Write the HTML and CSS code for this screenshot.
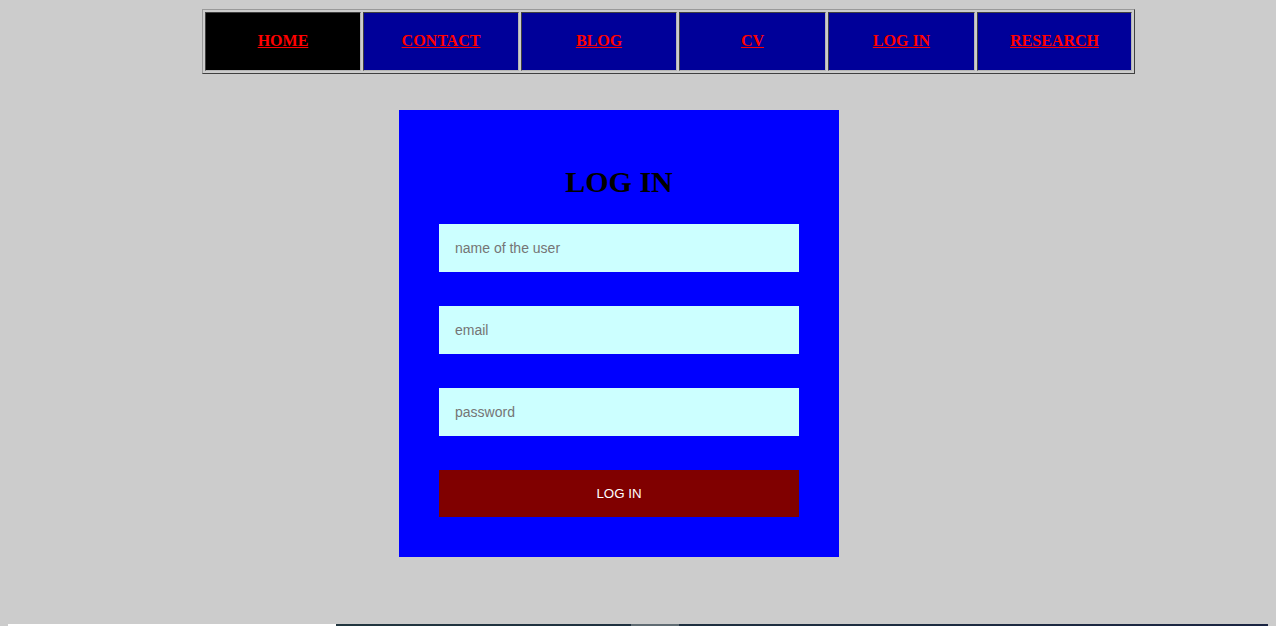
FILE: index.html
```html
<!DOCTYPE html>
<html lang="en">
<head>
<meta charset="utf-8">
<title>Log in</title>
<link rel="stylesheet" href="styles.css">
</head>
<body>
<nav class="nav">
  <div class="nav-item active w156"><a href="#">HOME</a></div>
  <div class="nav-item w156"><a href="#">CONTACT</a></div>
  <div class="nav-item w156"><a href="#">BLOG</a></div>
  <div class="nav-item w147"><a href="#">CV</a></div>
  <div class="nav-item w147"><a href="#">LOG IN</a></div>
  <div class="nav-item w155"><a href="#">RESEARCH</a></div>
</nav>
<form class="card">
  <h1 class="title">LOG IN</h1>
  <input class="field" type="text" placeholder="name of the user">
  <input class="field" type="email" placeholder="email">
  <input class="field" type="password" placeholder="password">
  <button class="submit" type="button">LOG IN</button>
</form>
<footer class="footer">
  <div class="foot-white"></div>
  <div class="foot-dark"><div class="foot-mark"></div></div>
</footer>
</body>
</html>
```
FILE: styles.css
```css
html {
  background: #cccccc;
  overflow: hidden;
}
body {
  margin: 8px;
  font-family: "Liberation Serif", "Times New Roman", serif;
}
.nav {
  display: flex;
  gap: 2px;
  box-sizing: border-box;
  width: 933px;
  margin: 1px 0 0 194px;
  padding: 2px;
  border: 1px solid;
  border-color: #9a9a9a #404040 #404040 #9a9a9a;
}
.nav-item {
  box-sizing: border-box;
  height: 59px;
  padding-bottom: 2px;
  display: flex;
  align-items: center;
  justify-content: center;
  background: #000099;
  border: 1px solid;
  border-color: #404040 #b4b4b4 #b4b4b4 #404040;
}
.nav-item.active {
  background: #000000;
}
.w156 { width: 156px; }
.w155 { width: 155px; }
.w147 { width: 147px; }
.nav-item a {
  color: #ff0000;
  font-weight: bold;
  font-size: 16px;
  text-decoration: underline;
}
.card {
  box-sizing: border-box;
  width: 440px;
  margin: 36px 0 0 391px;
  padding: 40px;
  background: #0000ff;
  display: flex;
  flex-direction: column;
  gap: 34px;
}
.title {
  margin: 15px 0 -9px;
  font-size: 30px;
  line-height: 34px;
  font-weight: bold;
  text-align: center;
  color: #000000;
}
.field {
  box-sizing: border-box;
  width: 360px;
  height: 48px;
  margin: 0;
  padding: 0 16px;
  border: none;
  outline: none;
  background: #ccffff;
  font-family: "Liberation Sans", Arial, sans-serif;
  font-size: 14px;
  color: #000;
}
.field::placeholder {
  color: #757575;
}
.submit {
  box-sizing: border-box;
  width: 360px;
  height: 47px;
  margin: 0;
  padding-bottom: 2px;
  border: none;
  background: #800000;
  color: #ffffff;
  font-family: "Liberation Sans", Arial, sans-serif;
  font-size: 13.333px;
}
.footer {
  display: flex;
  width: 1276px;
  margin: 67px 0 0 -8px;
  height: 40px;
}
.foot-white {
  width: 336px;
  background: #ffffff;
}
.foot-dark {
  flex: 1;
  position: relative;
  background: linear-gradient(90deg, #21363f, #1d2c40 60%, #1a2442);
}
.foot-mark {
  position: absolute;
  left: 295px;
  top: 0;
  width: 48px;
  height: 100%;
  background: #5f6b72;
}
```
